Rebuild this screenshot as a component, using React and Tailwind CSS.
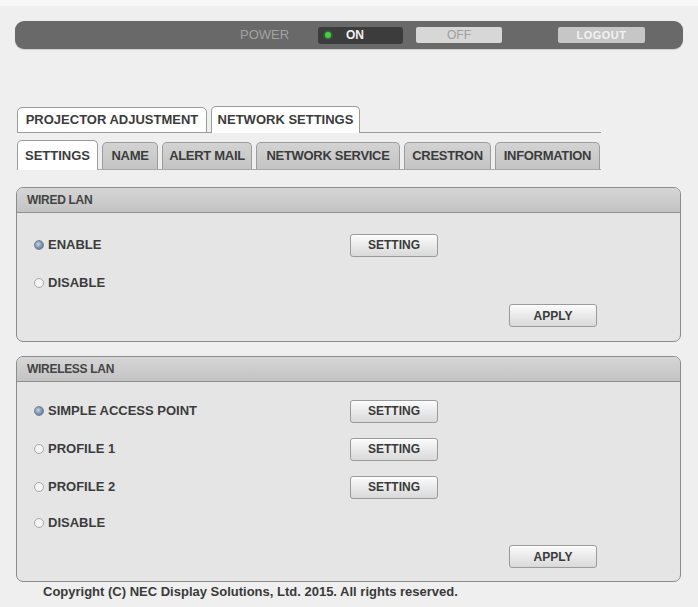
import React from "react";

const font = { fontFamily: '"Liberation Sans", Arial, sans-serif' };

function Radio({ checked }) {
  return (
    <span
      className={
        "inline-block w-[10px] h-[10px] rounded-full border shrink-0 " +
        (checked
          ? "border-[#6b7f99] bg-[radial-gradient(circle_at_40%_40%,#c9d6e6_0%,#7b8fab_55%,#5d6f88_100%)]"
          : "border-[#a8a8a8] bg-[#f4f4f4]")
      }
    />
  );
}

function Btn({ children }) {
  return (
    <button className="w-[88px] h-[23px] rounded-[3px] border border-[#9a9a9a] bg-gradient-to-b from-[#fbfbfb] to-[#d9d9d9] text-[12px] font-bold text-[#3a3a3a] shadow-[inset_0_1px_0_#ffffff] flex items-center justify-center">
      {children}
    </button>
  );
}

function OptionRow({ label, checked, button }) {
  return (
    <div className="h-[38px] flex items-center">
      <div className="w-[333px] flex items-center pl-[17px] gap-[4px]">
        <Radio checked={checked} />
        <span className="text-[13px] font-bold text-[#3c3c3c]">{label}</span>
      </div>
      {button && <Btn>SETTING</Btn>}
    </div>
  );
}

function Panel({ title, children, bodyClass }) {
  return (
    <div className="w-[665px] rounded-[7px] border border-[#8c8c8c] overflow-hidden bg-[#e5e5e5]">
      <div className="h-[25px] bg-gradient-to-b from-[#d6d6d6] to-[#c3c3c3] border-b border-[#8f8f8f] flex items-center pl-[10px]">
        <span className="text-[12px] font-bold text-[#444] tracking-[-0.3px]">{title}</span>
      </div>
      <div className={bodyClass}>{children}</div>
    </div>
  );
}

function Apply() {
  return (
    <div className="flex pl-[492px]">
      <Btn>APPLY</Btn>
    </div>
  );
}

const subTabs = [
  { label: "NAME", w: "w-[56px]" },
  { label: "ALERT MAIL", w: "w-[90px]" },
  { label: "NETWORK SERVICE", w: "w-[144px]" },
  { label: "CRESTRON", w: "w-[87px]" },
  { label: "INFORMATION", w: "w-[105px]" },
];

export default function App() {
  return (
    <div style={font} className="w-[698px] h-[607px] bg-[#efefef] overflow-hidden">
      {/* status bar */}
      <div className="h-[6px] bg-[#f7f7f7]" />
      <div className="pt-[15px] pl-[15px]">
        <div className="w-[668px] h-[28px] rounded-[9px] bg-[#696969] flex items-center shadow-[0_1px_1px_rgba(0,0,0,0.15)]">
          <span className="ml-[225px] w-[78px] text-[13px] text-[#a3a3a3]">POWER</span>
          <div className="w-[85px] h-[17px] rounded-[3px] bg-[#3c3c3c] flex items-center pl-[7px]">
            <span className="w-[6px] h-[6px] rounded-full bg-[#3fd13f] shadow-[0_0_3px_#3fd13f]" />
            <span className="ml-[15px] text-[12px] font-bold text-[#f0f0f0]">ON</span>
          </div>
          <div className="ml-[13px] w-[86px] h-[16px] rounded-[2px] bg-[#d7d7d7] flex items-center justify-center">
            <span className="text-[12px] text-[#9e9e9e]">OFF</span>
          </div>
          <div className="ml-[56px] w-[87px] h-[16px] rounded-[2px] bg-[#c6c6c6] flex items-center justify-center">
            <span className="text-[11px] font-bold text-[#f2f2f2] tracking-[0.5px]">LOGOUT</span>
          </div>
        </div>
      </div>

      {/* main tabs */}
      <div className="mt-[58px] ml-[17px] w-[584px] border-b border-[#9c9c9c] flex items-end gap-[4px] h-[26px]">
        <div className="w-[190px] h-[26px] -mb-px rounded-t-[5px] border border-[#9c9c9c] bg-white flex items-center justify-center">
          <span className="text-[13px] font-bold text-[#3c3c3c]">PROJECTOR ADJUSTMENT</span>
        </div>
        <div className="w-[149px] h-[27px] -mb-px rounded-t-[5px] border border-b-0 border-[#9c9c9c] bg-white flex items-center justify-center">
          <span className="text-[13px] font-bold text-[#3c3c3c]">NETWORK SETTINGS</span>
        </div>
      </div>

      {/* sub tabs */}
      <div className="mt-[8px] ml-[17px] w-[584px] border-b border-[#a8a8a8] flex items-end gap-[4px] h-[29px]">
        <div className="w-[81px] h-[30px] -mb-px rounded-t-[5px] border border-b-0 border-[#9c9c9c] bg-white flex items-center justify-center">
          <span className="text-[13px] font-bold text-[#3c3c3c]">SETTINGS</span>
        </div>
        {subTabs.map((t) => (
          <div
            key={t.label}
            className={
              t.w +
              " h-[27px] rounded-t-[5px] border border-b-0 border-[#9c9c9c] bg-gradient-to-b from-[#d3d3d3] to-[#c4c4c4] flex items-center justify-center"
            }
          >
            <span className="text-[13px] font-bold text-[#3c3c3c] tracking-[-0.3px]">{t.label}</span>
          </div>
        ))}
      </div>

      {/* panels */}
      <div className="ml-[16px] mt-[17px] flex flex-col gap-[14px]">
        <Panel title="WIRED LAN" bodyClass="pt-[13px] pb-[14px]">
          <OptionRow label="ENABLE" checked button />
          <OptionRow label="DISABLE" />
          <div className="mt-[2px]">
            <Apply />
          </div>
        </Panel>
        <Panel title="WIRELESS LAN" bodyClass="pt-[10px] pb-[13px]">
          <OptionRow label="SIMPLE ACCESS POINT" checked button />
          <OptionRow label="PROFILE 1" button />
          <OptionRow label="PROFILE 2" button />
          <div className="-mt-[2px]">
            <OptionRow label="DISABLE" />
          </div>
          <div className="mt-[3px]">
            <Apply />
          </div>
        </Panel>
      </div>

      <div className="ml-[43px] mt-[0px] text-[13px] font-bold text-[#3a3a3a]">
        Copyright (C) NEC Display Solutions, Ltd. 2015. All rights reserved.
      </div>
    </div>
  );
}
